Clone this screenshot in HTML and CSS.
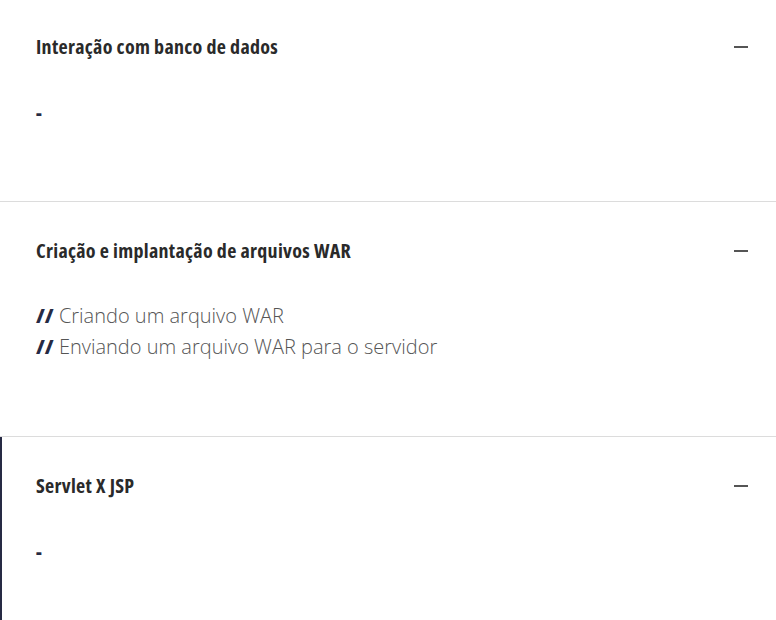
FILE: index.html
```html
<!DOCTYPE html>
<html lang="pt">
<head>
<meta charset="utf-8">
<link rel="stylesheet" href="styles.css">
</head>
<body>
<div class="accordion">
  <section class="item">
    <div class="head">
      <h3 class="title">Interação com banco de dados</h3>
      <span class="minus"></span>
    </div>
    <div class="body">
      <p class="dash">-</p>
    </div>
  </section>
  <section class="item">
    <div class="head">
      <h3 class="title">Criação e implantação de arquivos WAR</h3>
      <span class="minus"></span>
    </div>
    <div class="body lines">
      <p class="line"><b class="mark">//</b> Criando um arquivo WAR</p>
      <p class="line"><b class="mark">//</b> Enviando um arquivo WAR para o servidor</p>
    </div>
  </section>
  <section class="item active">
    <div class="head">
      <h3 class="title">Servlet X JSP</h3>
      <span class="minus"></span>
    </div>
    <div class="body">
      <p class="dash">-</p>
    </div>
  </section>
</div>
</body>
</html>
```
FILE: styles.css
```css
html, body {
  margin: 0;
  padding: 0;
  background: #fff;
}
body {
  font-family: "Open Sans", "Liberation Sans", sans-serif;
  overflow: hidden;
}
.accordion {
  margin-top: -2px;
}
.item {
  padding: 35px 28px 73px 36px;
  border-bottom: 1px solid #dcdcdc;
}
.item.active {
  border-left: 2px solid #262a44;
  padding-left: 34px;
  border-bottom: none;
}
.head {
  display: flex;
  align-items: center;
  justify-content: space-between;
  height: 28px;
}
.title {
  margin: 0;
  font-size: 20px;
  font-weight: 700;
  font-stretch: 75%;
  letter-spacing: 0.3px;
  color: #2a2a2a;
  line-height: 28px;
}
.minus {
  width: 14px;
  height: 2px;
  background: #555;
}
.body {
  margin-top: 36px;
}
.body.lines {
  margin-top: 35px;
  margin-bottom: 1px;
}
.body p {
  margin: 0;
  line-height: 31px;
}
.dash {
  font-size: 18px;
  font-weight: 800;
  color: #262a44;
}
.line {
  font-size: 20px;
  font-weight: 300;
  color: #555;
}
.mark {
  font-weight: 800;
  color: #262a44;
}
```
